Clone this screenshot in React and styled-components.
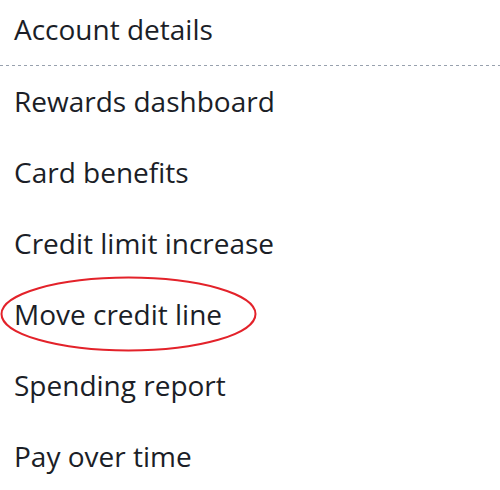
import React from 'react';
import styled, { createGlobalStyle } from 'styled-components';

const TEXT = '#1b1e27';
const RED = '#e3222a';

const GlobalStyle = createGlobalStyle`
  body {
    margin: 0;
    background: #ffffff;
    font-family: "Open Sans", "Noto Sans", sans-serif;
  }
`;

const Menu = styled.ul`
  list-style: none;
  margin: 0;
  padding: 0;
  width: 500px;
  height: 490px;
  overflow: hidden;
`;

const Item = styled.li`
  position: relative;
  padding-left: 14px;
  font-size: 28px;
  line-height: ${p => (p.header ? '58px' : '71px')};
  padding-bottom: ${p => (p.header ? '7px' : '0')};
  color: ${TEXT};
  white-space: nowrap;
`;

const Divider = styled.li`
  height: 1px;
  background-image: repeating-linear-gradient(
    to right,
    #98a1ae 0,
    #98a1ae 3px,
    transparent 3px,
    transparent 6px
  );
`;

const Circle = styled.svg`
  position: absolute;
  left: 0;
  top: -3px;
  width: 260px;
  height: 78px;
  pointer-events: none;
`;

const items = [
  'Rewards dashboard',
  'Card benefits',
  'Credit limit increase',
  'Move credit line',
  'Spending report',
  'Pay over time',
];

const App = () => {
  return (
    <>
      <GlobalStyle />
      <Menu>
        <Item header>Account details</Item>
        <Divider />
        {items.map(label => (
          <Item key={label}>
            {label}
            {label === 'Move credit line' && (
              <Circle viewBox="0 0 260 78">
                <ellipse cx="128.5" cy="38" rx="127" ry="36.5" fill="none" stroke={RED} strokeWidth="2" />
              </Circle>
            )}
          </Item>
        ))}
      </Menu>
    </>
  );
};

export default App;
